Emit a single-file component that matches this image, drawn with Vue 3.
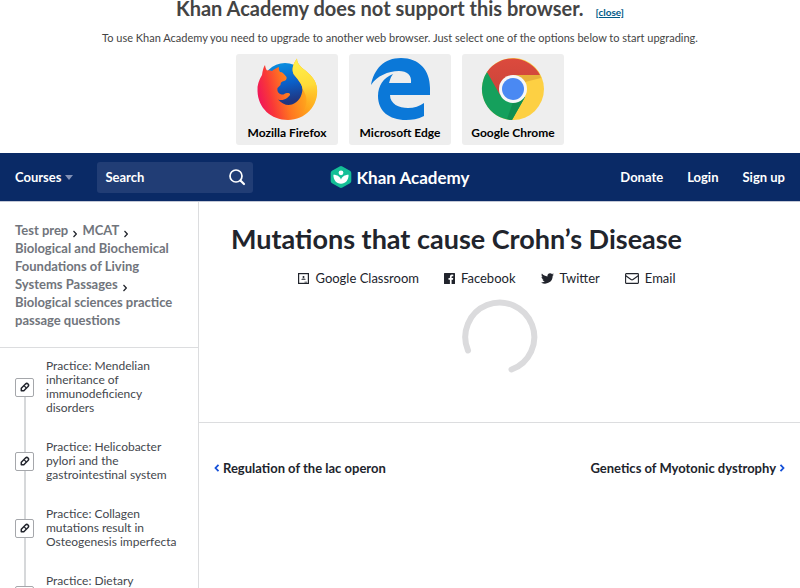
<template>
  <div class="page">
    <!-- Unsupported browser notice -->
    <section v-if="showNotice" class="notice">
      <div class="notice-title">
        <h2>Khan Academy does not support this browser.</h2>
        <a href="#" class="close" @click.prevent="showNotice = false">[close]</a>
      </div>
      <p>
        To use Khan Academy you need to upgrade to another web browser. Just select one of the
        options below to start upgrading.
      </p>
      <div class="browsers">
        <a href="#" class="browser">
          <svg width="64" height="64" viewBox="0 0 64 64" aria-hidden="true">
            <defs>
              <linearGradient id="foxBody" x1="0" y1="0.6" x2="1" y2="0.35">
                <stop offset="0" stop-color="#f0145a" />
                <stop offset="0.2" stop-color="#f93838" />
                <stop offset="0.45" stop-color="#ff7520" />
                <stop offset="0.75" stop-color="#ffa51c" />
                <stop offset="1" stop-color="#ffc72a" />
              </linearGradient>
              <linearGradient id="foxGlobe" x1="0.4" y1="0" x2="0.6" y2="1">
                <stop offset="0" stop-color="#0a8fe0" />
                <stop offset="0.45" stop-color="#0a5fc8" />
                <stop offset="0.85" stop-color="#21357f" />
              </linearGradient>
              <linearGradient id="foxTail" x1="0.4" y1="0" x2="0.5" y2="1">
                <stop offset="0" stop-color="#fff14a" />
                <stop offset="0.5" stop-color="#ffdb38" />
                <stop offset="1" stop-color="#ffa81c" stop-opacity="0" />
              </linearGradient>
            </defs>
            <circle cx="30" cy="29" r="23" fill="url(#foxGlobe)" />
            <path
              d="M10 8C10.5 11 11 12 12 13.5C14 13 15.5 13.5 17 14C19 12 21.5 11 24 10C23.7 12 24 13.5 25 15C28 15 29 17 31.5 20C32 22 31 23.5 29 24C26.5 24.5 25.5 25.5 25.5 28L22.5 31C22 34 23 36.5 26.5 37.5C29.5 38 30 35.5 32.5 36C34 36 35.5 36.5 35 38C33 40 32 42 29 42.5Q26 43.5 23 42.5C27 47 32 49 37 47.5C43 45.5 47 40 47.5 32C47 26 42 22 38.5 17C36.5 12 38 7 42 1.5C42 7 46 10 51 14C57 19 61 24 62 31C64 49 50 63 33 63C16 63 3 51 2.5 34C2 28 4 23 7 18C7.5 14 8.5 10 10 8Z"
              fill="url(#foxBody)"
            />
            <path
              d="M42 1.5C42 7 46 10 51 14C57 19 61 24 62 31C63 44 56 53 47 57C53 47 53 40 47.5 32C47 26 42 22 38.5 17C36.5 12 38 7 42 1.5Z"
              fill="url(#foxTail)"
            />
          </svg>
          Mozilla Firefox
        </a>
        <a href="#" class="browser">
          <svg width="64" height="64" viewBox="0 0 64 64" aria-hidden="true">
            <path
              d="M3 28C6 12 16 1 33 1C51 1 62 13 62 31V38H22C22 47 31 51 40 51C46 51 52 49 56 46V59C50 62 44 63 38 63C21 63 10 54 10 39C10 29 15 21 25 17C22 21 22 24 21 26H43C44 18 39 14 31 14C20 14 9 19 3 28Z"
              fill="#0b78d8"
            />
          </svg>
          Microsoft Edge
        </a>
        <a href="#" class="browser">
          <svg width="64" height="64" viewBox="0 0 64 64" aria-hidden="true">
            <defs>
              <linearGradient id="redShade" x1="0" y1="0" x2="0" y2="1">
                <stop offset="0" stop-color="#dc4a3d" />
                <stop offset="1" stop-color="#c9443a" />
              </linearGradient>
            </defs>
            <circle cx="32" cy="32" r="31" fill="#fdd043" />
            <path d="M6 15A31 31 0 0 0 31 63L44 40L32 32Z" fill="#15a05c" />
            <path d="M6 15A31 31 0 0 1 59 18H32L19 38Z" fill="url(#redShade)" />
            <path d="M32 18H59L60 21L44 25Z" fill="#e7b139" />
            <path d="M31 63L44 40L32 45L26 62Z" fill="#118e50" />
            <circle cx="32" cy="32" r="14" fill="#f7f7f7" />
            <circle cx="32" cy="32" r="11" fill="#4a89f3" />
          </svg>
          Google Chrome
        </a>
      </div>
    </section>

    <header class="topbar">
      <div class="topbar-left">
        <button class="courses" type="button">
          Courses
          <svg width="8" height="5" viewBox="0 0 8 5" aria-hidden="true">
            <path d="M0 0H8L4 5Z" fill="#8290b5" />
          </svg>
        </button>
        <form class="search" @submit.prevent>
          <input v-model="query" type="text" placeholder="Search" aria-label="Search" />
          <button type="submit" aria-label="Submit search">
            <svg width="18" height="18" viewBox="0 0 18 18" fill="none" stroke="#fff" aria-hidden="true">
              <circle cx="8" cy="8" r="6" stroke-width="1.7" />
              <path d="M12.5 12.5L16 16" stroke-width="2.2" stroke-linecap="round" />
            </svg>
          </button>
        </form>
      </div>
      <a href="#" class="logo">
        <svg width="22" height="24" viewBox="0 0 22 24" aria-hidden="true">
          <path
            d="M9.6 1.4Q11 .6 12.4 1.4L20 5.7Q21.3 6.5 21.3 8V16Q21.3 17.5 20 18.3L12.4 22.6Q11 23.4 9.6 22.6L2 18.3Q.7 17.5 .7 16V8Q.7 6.5 2 5.7Z"
            fill="#14bf96"
          />
          <circle cx="11" cy="7.8" r="2.4" fill="#fff" />
          <path
            d="M3.4 9.8C7.4 9.8 10.4 12 11 14.7C11.6 12 14.6 9.8 18.6 9.8C18.8 14.8 15.6 18.8 11 18.8C6.4 18.8 3.2 14.8 3.4 9.8Z"
            fill="#fff"
          />
        </svg>
        <span>Khan Academy</span>
      </a>
      <nav class="account">
        <a href="#">Donate</a>
        <a href="#">Login</a>
        <a href="#">Sign up</a>
      </nav>
    </header>

    <div class="content">
      <aside class="sidebar">
        <nav class="breadcrumbs" aria-label="Breadcrumb">
          <template v-for="(crumb, index) in crumbs" :key="crumb">
            <a href="#">{{ crumb }}</a>
            <svg
              v-if="index < crumbs.length - 1"
              class="crumb-arrow"
              width="4"
              height="8"
              viewBox="0 0 4 8"
              aria-hidden="true"
            >
              <path d="M.5 1L3.3 4L.5 7" fill="none" stroke="#21242c" stroke-width="1.2" />
            </svg>
            {{ ' ' }}
          </template>
        </nav>
        <ul class="lessons">
          <li v-for="lesson in lessons" :key="lesson">
            <a href="#">
              <span class="badge">
                <svg width="10" height="10" viewBox="0 0 10 10" fill="none" stroke="#21242c" aria-hidden="true">
                  <path
                    d="M1.3 6.2L5.5 2Q6.8 .8 8 2Q9.2 3.2 8 4.5L3.8 8.7L1.3 8.7Z"
                    stroke-width="1.5"
                    stroke-linejoin="round"
                  />
                  <path d="M4 3.7L6.3 6" stroke-width="1.2" />
                </svg>
              </span>
              <span class="lesson-title">{{ lesson }}</span>
            </a>
          </li>
        </ul>
      </aside>

      <main>
        <article>
          <h1>Mutations that cause Crohn’s Disease</h1>
          <div class="share">
            <a href="#">
              <svg width="11" height="11" viewBox="0 0 11 11" aria-hidden="true">
                <rect x=".6" y=".6" width="9.8" height="9.8" fill="none" stroke="#21242c" stroke-width="1.2" />
                <circle cx="5.5" cy="4" r="1" fill="#21242c" />
                <path d="M3.3 6.7Q3.3 5.5 5.5 5.5Q7.7 5.5 7.7 6.7ZM6.5 8.7H9V9.5H6.5Z" fill="#21242c" />
              </svg>
              Google Classroom
            </a>
            <a href="#">
              <svg width="11" height="11" viewBox="0 0 11 11" aria-hidden="true">
                <path
                  d="M.6 0H10.4Q11 0 11 .6V10.4Q11 11 10.4 11H7.6V6.8H9L9.2 5.1H7.6V4Q7.6 3.2 8.4 3.2H9.3V1.7Q8.8 1.6 8 1.6Q5.9 1.6 5.9 3.8V5.1H4.5V6.8H5.9V11H.6Q0 11 0 10.4V.6Q0 0 .6 0Z"
                  fill="#21242c"
                />
              </svg>
              Facebook
            </a>
            <a href="#">
              <svg width="13" height="11" viewBox="0 0 24 20" aria-hidden="true">
                <path
                  d="M24 2.4c-.9.4-1.8.7-2.8.8 1-.6 1.8-1.6 2.2-2.7-1 .6-2 1-3.1 1.2A4.9 4.9 0 0 0 12 6.2C7.9 6 4.3 4 1.7.9.4 3.2 1 6.1 3.2 7.5c-.8 0-1.6-.2-2.2-.6 0 2.3 1.6 4.4 3.9 4.9-.7.2-1.5.2-2.2.1.6 2 2.4 3.4 4.6 3.4A9.9 9.9 0 0 1 0 17.3 14 14 0 0 0 21.5 4.9c1-.7 1.8-1.6 2.5-2.5Z"
                  fill="#21242c"
                />
              </svg>
              Twitter
            </a>
            <a href="#">
              <svg width="14" height="11" viewBox="0 0 14 11" fill="none" stroke="#21242c" aria-hidden="true">
                <rect x=".6" y=".6" width="12.8" height="9.8" rx=".6" stroke-width="1.1" />
                <path d="M.8 2.8L6 6.5Q7 7.2 8 6.5L13.2 2.8" stroke-width="1.1" />
              </svg>
              Email
            </a>
          </div>
          <svg class="spinner" width="76" height="76" viewBox="0 0 76 76" role="img" aria-label="Loading">
            <path
              d="M6 51.5A34.5 34.5 0 1 1 49.5 70.5"
              fill="none"
              stroke="#dbdbdd"
              stroke-width="6"
              stroke-linecap="round"
            />
          </svg>
        </article>
        <nav class="pager">
          <a href="#">
            <svg width="6" height="8" viewBox="0 0 6 8" aria-hidden="true">
              <path d="M4.5 .8L1.5 4L4.5 7.2" fill="none" stroke="#1550d8" stroke-width="1.8" />
            </svg>
            Regulation of the lac operon
          </a>
          <a href="#">
            Genetics of Myotonic dystrophy
            <svg width="6" height="8" viewBox="0 0 6 8" aria-hidden="true">
              <path d="M1.5 .8L4.5 4L1.5 7.2" fill="none" stroke="#1550d8" stroke-width="1.8" />
            </svg>
          </a>
        </nav>
      </main>
    </div>
  </div>
</template>

<script setup>
import { ref } from 'vue'

const showNotice = ref(true)
const query = ref('')

const crumbs = [
  'Test prep',
  'MCAT',
  'Biological and Biochemical Foundations of Living Systems Passages',
  'Biological sciences practice passage questions'
]

const lessons = [
  'Practice: Mendelian inheritance of immunodeficiency disorders',
  'Practice: Helicobacter pylori and the gastrointestinal system',
  'Practice: Collagen mutations result in Osteogenesis imperfecta',
  'Practice: Dietary'
]
</script>

<style>
body {
  margin: 0;
  background: #fff;
}
</style>

<style scoped>
.page {
  display: flex;
  flex-direction: column;
  height: 100vh;
  overflow: hidden;
  font-family: Lato, 'Liberation Sans', sans-serif;
  color: #21242c;
}
a {
  color: inherit;
  text-decoration: none;
}
svg {
  flex: none;
}
button,
input {
  font: inherit;
  color: inherit;
  border: 0;
  padding: 0;
  background: none;
}
button {
  cursor: pointer;
}

/* notice */
.notice {
  flex: none;
  padding-bottom: 8px;
  text-align: center;
  color: #444;
}
.notice-title {
  display: flex;
  justify-content: center;
  align-items: baseline;
  gap: 12px;
}
.notice h2 {
  margin: 0;
  font-size: 20px;
  line-height: 16px;
}
.notice .close {
  font-size: 10px;
  line-height: 12px;
  font-weight: bold;
  color: #005a88;
  text-decoration: underline;
}
.notice p {
  margin: 12px 0 9px;
  font-size: 11px;
  line-height: 15px;
}
.browsers {
  display: flex;
  justify-content: center;
  gap: 11px;
}
.browser {
  display: flex;
  flex-direction: column;
  align-items: center;
  gap: 4px;
  width: 102px;
  height: 91px;
  padding-top: 3px;
  box-sizing: border-box;
  border-radius: 3px;
  background: #eee;
  color: #000;
  font-size: 12px;
  line-height: 15px;
  font-weight: bold;
}

/* top bar */
.topbar {
  flex: none;
  display: grid;
  grid-template-columns: 1fr auto 1fr;
  align-items: center;
  height: 48px;
  padding: 0 15px;
  background: #0a2a66;
  border-bottom: 1px solid #c3c8d6;
  color: #fff;
  font-size: 13px;
  font-weight: bold;
}
.topbar-left {
  display: flex;
  align-items: center;
  gap: 24px;
}
.courses {
  display: flex;
  align-items: center;
  gap: 4px;
}
.search {
  display: flex;
  align-items: center;
  width: 156px;
  height: 31px;
  padding: 0 7px 0 8px;
  box-sizing: border-box;
  border-radius: 3px;
  background: #213d75;
}
.search input {
  flex: 1;
  min-width: 0;
  outline: none;
}
.search input::placeholder {
  color: #fff;
  opacity: 1;
}
.search button {
  display: flex;
}
.logo {
  display: flex;
  align-items: center;
  gap: 4px;
  font-size: 17px;
}
.account {
  display: flex;
  justify-content: flex-end;
  gap: 24px;
}

/* sidebar */
.content {
  flex: 1;
  display: flex;
  min-height: 0;
}
.sidebar {
  flex: none;
  width: 198px;
  border-right: 1px solid #dcdddf;
}
.breadcrumbs {
  padding: 19px 15px 18px;
  border-bottom: 1px solid #dcdddf;
  color: #71757c;
  font-size: 13px;
  line-height: 18px;
  font-weight: bold;
}
.crumb-arrow {
  margin: 0 2px 0 5px;
  vertical-align: -3px;
}
.lessons {
  margin: 0;
  padding: 0;
  list-style: none;
}
.lessons a {
  display: flex;
  align-items: center;
  gap: 12px;
  min-height: 67px;
  padding: 11px 15px 14px;
  box-sizing: border-box;
  background: linear-gradient(#d6d8da, #d6d8da) 24px 0 / 2px 100% no-repeat;
  color: #44474d;
  font-size: 12px;
  line-height: 14px;
}
.lessons li:first-child a {
  background-position: 24px 40px;
}
.badge {
  flex: none;
  display: flex;
  align-items: center;
  justify-content: center;
  width: 17px;
  height: 17px;
  border: 1px solid #a5a7ab;
  border-radius: 2px;
  background: #fff;
}
.lesson-title {
  align-self: flex-start;
}

/* main column */
main {
  flex: 1;
}
article {
  padding: 19px 0 47px;
  border-bottom: 1px solid #dcdddf;
}
h1 {
  margin: 0 32px;
  font-size: 27px;
  line-height: 36px;
}
.share {
  display: flex;
  justify-content: center;
  margin: 11px 0;
  font-size: 13px;
  line-height: 20px;
}
.share a {
  display: flex;
  align-items: center;
  gap: 6px;
  margin-right: 25px;
}
.spinner {
  display: block;
  margin: 0 auto;
}
.pager {
  display: flex;
  justify-content: space-between;
  padding: 35px 15px;
  font-size: 13px;
  line-height: 20px;
  font-weight: bold;
}
.pager a {
  display: flex;
  align-items: center;
  gap: 3px;
}
</style>
